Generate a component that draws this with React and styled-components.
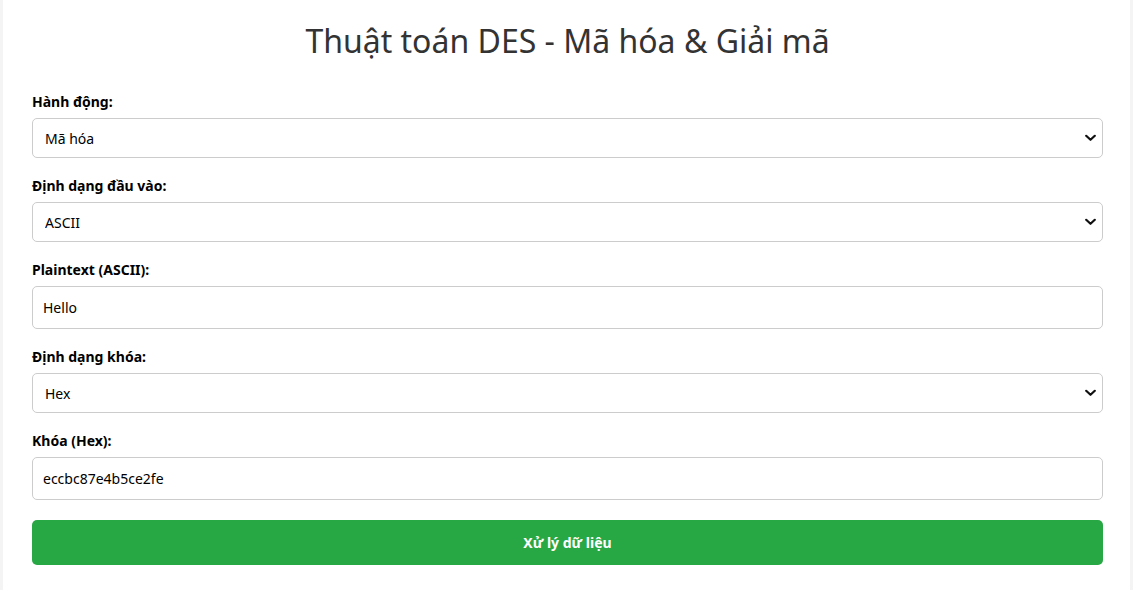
import React from 'react'
// Styling
import styled, { createGlobalStyle } from 'styled-components'

const fields = [
    { id: 'action', label: 'Hành động:', type: 'select', value: 'Mã hóa', options: ['Mã hóa', 'Giải mã'] },
    { id: 'inputFormat', label: 'Định dạng đầu vào:', type: 'select', value: 'ASCII', options: ['ASCII', 'Hex'] },
    { id: 'plaintext', label: 'Plaintext (ASCII):', type: 'text', value: 'Hello' },
    { id: 'keyFormat', label: 'Định dạng khóa:', type: 'select', value: 'Hex', options: ['Hex', 'ASCII'] },
    { id: 'key', label: 'Khóa (Hex):', type: 'text', value: 'eccbc87e4b5ce2fe' },
]

const Chevron = () => (
    <svg width="11" height="7" viewBox="0 0 11 7" fill="none">
        <path d="M1.2 1.2 L5.5 5.3 L9.8 1.2" stroke="#111" strokeWidth="2.2" strokeLinecap="round" strokeLinejoin="round" />
    </svg>
)

const App = () => {
    return (
        <>
        <GlobalStyle />
        <Container>
            <Title>Thuật toán DES - Mã hóa &amp; Giải mã</Title>
            {fields.map(field => (
                <Group key={field.id}>
                    <Label htmlFor={field.id}>{field.label}</Label>
                    {field.type === 'select' ? (
                        <SelectWrap>
                            <Select id={field.id} defaultValue={field.value}>
                                {field.options.map(opt => (
                                    <option key={opt} value={opt}>{opt}</option>
                                ))}
                            </Select>
                            <Arrow><Chevron /></Arrow>
                        </SelectWrap>
                    ) : (
                        <Input id={field.id} type="text" defaultValue={field.value} />
                    )}
                </Group>
            ))}
            <Button>Xử lý dữ liệu</Button>
        </Container>
        </>
    );
};

const GlobalStyle = createGlobalStyle`
    body {
        margin: 0;
        background: #f4f4f4;
        font-family: "Noto Sans", "Open Sans", sans-serif;
        color: #000;
    }
`
const Container = styled.div`
    width: 1127px;
    box-sizing: border-box;
    margin-left: 3px;
    padding: 22px 27px 24px 29px;
    background: #fff;
    min-height: 590px;
`
const Title = styled.h1`
    margin: 0 0 31px;
    text-align: center;
    font-size: 32px;
    font-weight: 400;
    line-height: 38px;
    color: #333;
`
const Group = styled.div`
    margin-bottom: 17px;
`
const Label = styled.label`
    display: block;
    margin-bottom: 5px;
    font-size: 14px;
    font-weight: 700;
    line-height: 22px;
`
const SelectWrap = styled.div`
    position: relative;
`
const Select = styled.select`
    display: block;
    width: 100%;
    height: 40px;
    padding: 0 12px;
    box-sizing: border-box;
    border: 1px solid #ccc;
    border-radius: 5px;
    background: #fff;
    font-family: inherit;
    font-size: 14px;
    color: #000;
    appearance: none;
    outline: none;
`
const Arrow = styled.span`
    position: absolute;
    right: 7px;
    top: 50%;
    transform: translateY(-50%);
    display: flex;
    pointer-events: none;
`
const Input = styled.input`
    display: block;
    width: 100%;
    height: 43px;
    padding: 0 10px;
    box-sizing: border-box;
    border: 1px solid #ccc;
    border-radius: 5px;
    font-family: inherit;
    font-size: 14px;
    color: #000;
    outline: none;
`
const Button = styled.button`
    display: block;
    width: 100%;
    height: 45px;
    margin-top: 20px;
    border: none;
    border-radius: 5px;
    background: #28a745;
    color: #fff;
    font-family: inherit;
    font-size: 14px;
    font-weight: 700;
    cursor: pointer;
`

export default App
